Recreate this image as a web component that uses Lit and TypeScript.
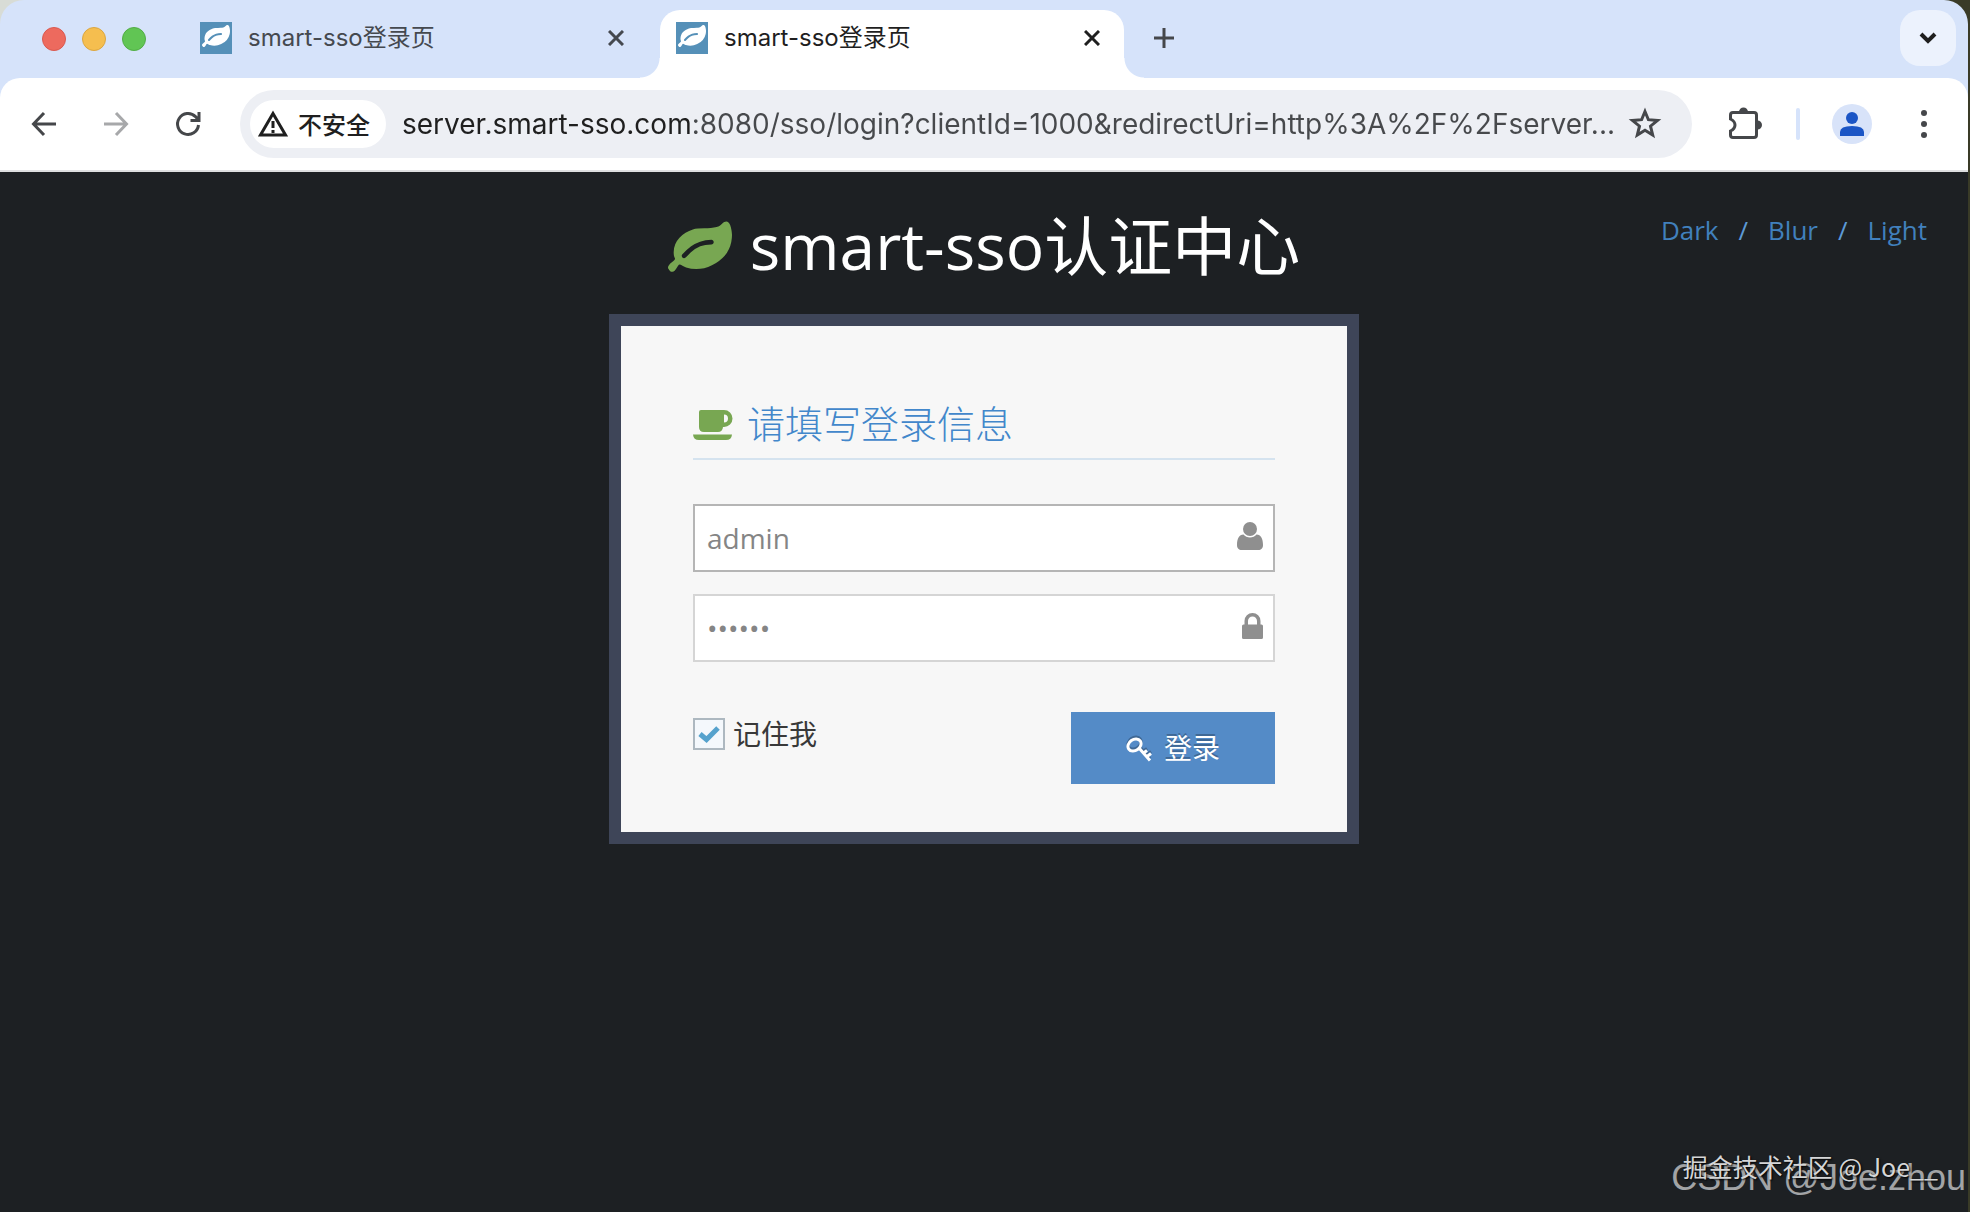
import { LitElement, html, css, svg } from "lit";
import { customElement, property, state } from "lit/decorators.js";

const leafPath =
  "M1280 704q0-26-19-45t-45-19q-172 0-318 49.5t-259.5 134-235.5 219.5q-19 21-19 45 0 26 19 45t45 19q24 0 45-19 27-24 74-71t67-66q137-124 268.5-176t313.5-52q26 0 45-19t19-45zm512-198q0 95-20 193-46 224-184.5 383t-357.5 268q-214 108-438 108-148 0-286-47-15-5-88-42t-96-37q-16 0-39.5 32t-45 70-52.5 70-60 32q-43 0-63.5-17.5t-45.5-59.5q-2-4-6-11t-5.5-10-3-9.5-1.5-13.5q0-35 31-73.5t68-65.5 68-56 31-48q0-4-14-38t-16-44q-9-51-9-104 0-115 43.5-220t119-184.5 170.5-139 204-95.5q55-18 145-25.5t179.5-9 178.5-6 163.5-24 113.5-56.5l29.5-29.5 29.5-28 27-20 36.5-16 43.5-4.5q39 0 70.5 46t47.5 112 24 124 8 96z";

const line = (w: number, h: number, body: unknown, stroke = 3) => html`<svg
  width=${w} height=${h} viewBox="0 0 ${w} ${h}" fill="none" stroke="currentColor"
  stroke-width=${stroke} aria-hidden="true">${body}</svg>`;

const solid = (w: number, h: number, body: unknown) => html`<svg
  width=${w} height=${h} viewBox="0 0 ${w} ${h}" fill="currentColor" aria-hidden="true">${body}</svg>`;

const leaf = (size: number) => html`<svg width=${size} height=${size}
  viewBox="0 0 1792 1792" fill="currentColor" aria-hidden="true"><path d=${leafPath}></path></svg>`;

@customElement("browser-tab")
class BrowserTab extends LitElement {
  @property() label = "";
  @property({ type: Boolean, reflect: true }) active = false;

  static styles = css`
    :host {
      display: flex;
      align-items: center;
      box-sizing: border-box;
      width: 464px;
      min-width: 0;
      height: 68px;
      padding: 0 16px 12px;
      gap: 16px;
      position: relative;
      color: #45494f;
      border-radius: 20px 20px 0 0;
    }
    :host([active]) {
      background: #fff;
      color: #1f1f1f;
    }
    :host([active])::before,
    :host([active])::after {
      content: "";
      position: absolute;
      bottom: 0;
      width: 20px;
      height: 20px;
    }
    :host([active])::before {
      left: -20px;
      background: radial-gradient(circle at 0 0, transparent 19px, #fff 20px);
    }
    :host([active])::after {
      right: -20px;
      background: radial-gradient(circle at 100% 0, transparent 19px, #fff 20px);
    }
    .favicon {
      display: flex;
      align-items: center;
      justify-content: center;
      flex: none;
      width: 32px;
      height: 32px;
      background: #5590b8;
      color: #fff;
    }
    .favicon svg {
      margin-bottom: 2px;
    }
    .label {
      flex: 1;
      min-width: 0;
      overflow: hidden;
      white-space: nowrap;
      font: 400 24px/32px Inter, "Noto Sans CJK SC", sans-serif;
    }
    button {
      display: flex;
      flex: none;
      padding: 8px;
      border: 0;
      background: none;
      color: #1f1f1f;
    }
    :host(:not([active])) button {
      color: #45494f;
    }
  `;

  render() {
    return html`
      <span class="favicon">${leaf(28)}</span>
      <span class="label">${this.label}</span>
      <button aria-label="关闭">${line(16, 16, svg`<path d="M1 1L15 15M15 1L1 15"/>`)}</button>
    `;
  }
}

@customElement("browser-bar")
class BrowserBar extends LitElement {
  static styles = css`
    :host {
      display: block;
      background: #d6e3fa;
      border-radius: 24px 24px 0 0;
      color: #45474a;
    }
    button {
      display: flex;
      align-items: center;
      justify-content: center;
      flex: none;
      padding: 0;
      border: 0;
      background: none;
      color: inherit;
    }
    .strip {
      display: flex;
      align-items: flex-end;
      height: 78px;
      padding: 0 12px 0 42px;
    }
    .lights {
      display: flex;
      gap: 16px;
      padding: 0 38px 27px 0;
    }
    .light {
      box-sizing: border-box;
      width: 24px;
      height: 24px;
      border-radius: 50%;
      border: 1px solid #d9594f;
      background: #ed6a5e;
    }
    .light.min {
      background: #f5be4f;
      border-color: #dba640;
    }
    .light.max {
      background: #61c554;
      border-color: #52ad45;
    }
    browser-tab + browser-tab {
      margin-left: 12px;
    }
    .new {
      padding: 0 30px 30px;
    }
    .list {
      width: 56px;
      height: 56px;
      margin: 0 0 12px auto;
      border-radius: 20px;
      background: #ecf2fd;
      color: #1f1f1f;
    }
    .toolbar {
      display: flex;
      align-items: center;
      height: 92px;
      padding: 0 30px;
      background: #fff;
      border-bottom: 2px solid #dedfe0;
      border-radius: 20px 20px 0 0;
    }
    .nav {
      display: flex;
      gap: 44px;
      padding-right: 38px;
    }
    .nav .off {
      color: #a7a8aa;
    }
    .omnibox {
      display: flex;
      align-items: center;
      flex: 1;
      min-width: 0;
      height: 68px;
      box-sizing: border-box;
      padding: 0 30px 0 10px;
      border-radius: 34px;
      background: #edeff4;
    }
    .chip {
      gap: 10px;
      height: 48px;
      padding: 0 16px 0 8px;
      border-radius: 24px;
      background: #fff;
      color: #1f1f1f;
      font: 500 24px/32px "Noto Sans CJK SC", sans-serif;
    }
    .url {
      flex: 1;
      min-width: 0;
      margin: 0 14px 0 16px;
      padding: 0;
      border: 0;
      outline: 0;
      font: 400 28px/40px Inter, sans-serif;
      color: transparent;
      background: linear-gradient(to right, #1f1f1f 292px, #47494c 292px);
      -webkit-background-clip: text;
      background-clip: text;
    }
    .tools {
      display: flex;
      align-items: center;
      gap: 32px;
      padding-left: 36px;
    }
    .rule {
      width: 4px;
      height: 32px;
      border-radius: 2px;
      background: #d6e3fb;
    }
    .avatar {
      width: 40px;
      height: 40px;
      border-radius: 50%;
      background: #d8e3f9;
      color: #1b55c5;
    }
    .menu {
      width: 28px;
      margin-left: 6px;
    }
  `;

  render() {
    return html`
      <div class="strip">
        <div class="lights">
          <span class="light"></span><span class="light min"></span><span class="light max"></span>
        </div>
        <browser-tab label="smart-sso登录页"></browser-tab>
        <browser-tab label="smart-sso登录页" active></browser-tab>
        <button class="new" aria-label="新标签页">
          ${line(20, 20, svg`<path d="M10 0V20M0 10H20"/>`)}
        </button>
        <button class="list" aria-label="搜索标签页">
          ${line(18, 12, svg`<path d="M2 2L9 9L16 2"/>`, 4)}
        </button>
      </div>
      <div class="toolbar">
        <div class="nav">
          <button aria-label="后退">${line(28, 28, svg`<path d="M26 14H4M14 3L3.500 14L14 25"/>`)}</button>
          <button class="off" aria-label="前进">${line(28, 28, svg`<path d="M2 14H24M14 3L24.500 14L14 25"/>`)}</button>
          <button aria-label="重新加载">
            ${line(28, 28, svg`<path d="M24.500 15A10.500 10.500 0 1 1 21.500 6.600L24 9.500M25 2V10.500H16.500"/>`)}
          </button>
        </div>
        <div class="omnibox">
          <button class="chip">
            ${line(30, 28, svg`<path d="M15 3.500L27.500 25H2.500Z"/><path d="M15 11V18M15 20V23"/>`)}不安全
          </button>
          <input class="url" aria-label="地址" spellcheck="false"
            .value=${"server.smart-sso.com:8080/sso/login?clientId=1000&redirectUri=http%3A%2F%2Fserver..."} />
          <button aria-label="收藏">
            ${line(34, 34, svg`<path d="M17 4.500L20.400 12.700L29.500 13.400L22.500 19.200L24.700 28L17 23.300L9.300 28L11.500 19.200L4.500 13.400L13.600 12.700Z"/>`)}
          </button>
        </div>
        <div class="tools">
          <button aria-label="扩展程序">
            ${line(36, 34, svg`<path d="M5 5.500H26Q28.500 5.500 28.500 8V28Q28.500 30.500 26 30.500H5Q2.500 30.500 2.500 28V24C8.500 21 8.500 15 2.500 12V8Q2.500 5.500 5 5.500Z"/><path fill="currentColor" stroke="none" d="M11 5A4.500 4.500 0 0 1 20 5ZM29.500 13.500A4.500 4.500 0 0 1 29.500 22.500Z"/>`)}
          </button>
          <span class="rule"></span>
          <button class="avatar" aria-label="个人资料">
            ${solid(24, 24, svg`<circle cx="12" cy="6" r="6"/><path d="M0 24V20Q0 14 12 14Q24 14 24 20V24Z"/>`)}
          </button>
          <button class="menu" aria-label="菜单">
            ${solid(8, 28, svg`<circle cx="4" cy="3" r="3"/><circle cx="4" cy="14" r="3"/><circle cx="4" cy="25" r="3"/>`)}
          </button>
        </div>
      </div>
    `;
  }
}

@customElement("login-box")
class LoginBox extends LitElement {
  @state() private remember = true;

  static styles = css`
    :host {
      display: block;
      box-sizing: border-box;
      width: 750px;
      max-width: 100%;
      padding: 68px 72px 48px;
      border: 12px solid #3e4558;
      background: #f7f7f7;
      font-family: "Open Sans", "Noto Sans CJK SC", sans-serif;
    }
    h2 {
      display: flex;
      align-items: flex-start;
      gap: 14px;
      margin: 0 0 44px;
      padding-bottom: 8px;
      border-bottom: 2px solid #d5e3ef;
      color: #4287cb;
      font: 200 38px/56px "Noto Sans CJK SC", sans-serif;
    }
    h2 svg {
      margin-top: 15px;
      color: #78a752;
    }
    .field {
      display: flex;
      align-items: center;
      box-sizing: border-box;
      height: 68px;
      margin-bottom: 22px;
      padding: 0 10px 0 12px;
      border: 2px solid #d5d5d5;
      background: #fff;
      color: #8f8f8f;
    }
    .field.current {
      border-color: #b5b5b5;
    }
    .field svg {
      margin-bottom: 4px;
    }
    .field input {
      flex: 1;
      min-width: 0;
      padding: 0;
      border: 0;
      outline: 0;
      background: none;
      color: #858585;
      font: 400 28px/40px "Open Sans", sans-serif;
    }
    .actions {
      display: flex;
      justify-content: space-between;
      align-items: flex-start;
      margin-top: 50px;
    }
    .remember {
      display: flex;
      align-items: center;
      gap: 8px;
      color: #393939;
      font-size: 28px;
      line-height: 44px;
    }
    .box {
      display: grid;
      width: 32px;
      height: 32px;
    }
    .box > * {
      grid-area: 1 / 1;
    }
    .box input {
      appearance: none;
      box-sizing: border-box;
      width: 32px;
      height: 32px;
      margin: 0;
      border: 2px solid #adb8c0;
      background: #f4f8fc;
    }
    .box svg {
      place-self: center;
      color: #55a2cd;
      pointer-events: none;
    }
    .submit {
      display: flex;
      align-items: center;
      justify-content: center;
      gap: 12px;
      width: 204px;
      height: 72px;
      padding: 0;
      border: 0;
      background: #548bc7;
      color: #fff;
      font: 400 28px/40px "Open Sans", "Noto Sans CJK SC", sans-serif;
      text-shadow: 0 -2px 0 rgba(0, 0, 0, 0.25);
    }
    .submit svg {
      margin-top: 4px;
      filter: drop-shadow(0 -2px 0 rgba(0, 0, 0, 0.25));
    }
  `;

  render() {
    return html`
      <h2>
        ${solid(40, 32, svg`<path fill-rule="evenodd" d="M8 1H31A8.500 8.500 0 0 1 31 18H30Q29.500 23 25 23H11Q6 23 6 18V3Q6 1 8 1ZM31 5.500V13.500A4 4 0 0 0 31 5.500ZM0 25.500H39Q38.500 31 33 31H6Q0.500 31 0 25.500Z"/>`)}
        <span>请填写登录信息</span>
      </h2>
      <label class="field current">
        <input type="text" aria-label="用户名" .value=${"admin"} />
        ${solid(26, 28, svg`<circle cx="13" cy="7" r="7"/><path d="M6.500 12.500C2 12.500 0 17 0 23C0 26.500 2 28 4.500 28H21.500C24 28 26 26.500 26 23C26 17 24 12.500 19.500 12.500C18 14.500 15.500 15.500 13 15.500S8 14.500 6.500 12.500Z"/>`)}
      </label>
      <label class="field">
        <input type="password" aria-label="密码" .value=${"123456"} />
        ${solid(21, 26, svg`<path fill-rule="evenodd" d="M2.500 11.500V8A8 8 0 0 1 18.500 8V11.500H19.500Q21 11.500 21 13V24.500Q21 26 19.500 26H1.500Q0 26 0 24.500V13Q0 11.500 1.500 11.500ZM6 11.500H15V8A4.500 4.500 0 0 0 6 8Z"/>`)}
      </label>
      <div class="actions">
        <label class="remember">
          <span class="box">
            <input type="checkbox" .checked=${this.remember}
              @change=${(e: Event) => (this.remember = (e.target as HTMLInputElement).checked)} />
            ${this.remember ? line(22, 18, svg`<path d="M2 9L8.500 14.500L20 3"/>`, 5) : null}
          </span>
          记住我
        </label>
        <button class="submit">
          ${line(26, 26, svg`<ellipse cx="8.500" cy="8" rx="7" ry="5.500" transform="rotate(-35 8.500 8)"/><path d="M13 11L24 23.500M17.500 16L21 13.500M21 19.500L25 16.500"/>`)}
          登录
        </button>
      </div>
    `;
  }
}

@customElement("app-root")
class AppRoot extends LitElement {
  static styles = css`
    :host {
      display: flex;
      flex-direction: column;
      box-sizing: border-box;
      min-height: 100vh;
      padding-right: 2px;
      background: linear-gradient(to right, #d8dcd6 50%, #3a3b27 50%);
      font-family: "Open Sans", "Noto Sans CJK SC", sans-serif;
    }
    main {
      display: flex;
      flex-direction: column;
      align-items: center;
      flex: 1;
      position: relative;
      background: #1d2023;
    }
    h1 {
      display: flex;
      align-items: flex-start;
      gap: 18px;
      margin: 32px 0 26px;
      color: #fff;
      font-size: 64px;
      font-weight: 400;
      line-height: 84px;
    }
    h1 svg {
      margin-top: 13px;
      color: #78a752;
    }
    .themes {
      display: flex;
      gap: 20px;
      position: absolute;
      top: 38px;
      right: 41px;
      color: #5c9ad6;
      font-size: 26px;
      line-height: 40px;
    }
    .themes a {
      color: #4180bd;
      text-decoration: none;
    }
    .mark {
      position: absolute;
      white-space: nowrap;
    }
    .mark.site {
      right: 2px;
      bottom: 12px;
      color: #a2a4a6;
      font: 400 36px/44px "Liberation Sans", sans-serif;
    }
    .mark.community {
      right: 30px;
      bottom: 28px;
      color: #d5d6d7;
      font: 400 25px/36px "Noto Sans CJK SC", sans-serif;
      text-shadow: 1px 1px 2px #000;
    }
  `;

  render() {
    return html`
      <browser-bar></browser-bar>
      <main>
        <nav class="themes">
          <a href="#dark">Dark</a><span>/</span><a href="#blur">Blur</a><span>/</span><a href="#light">Light</a>
        </nav>
        <h1>${leaf(64)}<span>smart-sso认证中心</span></h1>
        <login-box></login-box>
        <span class="mark site">CSDN @Joe.zhou</span>
        <span class="mark community">掘金技术社区 @ Joe__</span>
      </main>
    `;
  }
}
